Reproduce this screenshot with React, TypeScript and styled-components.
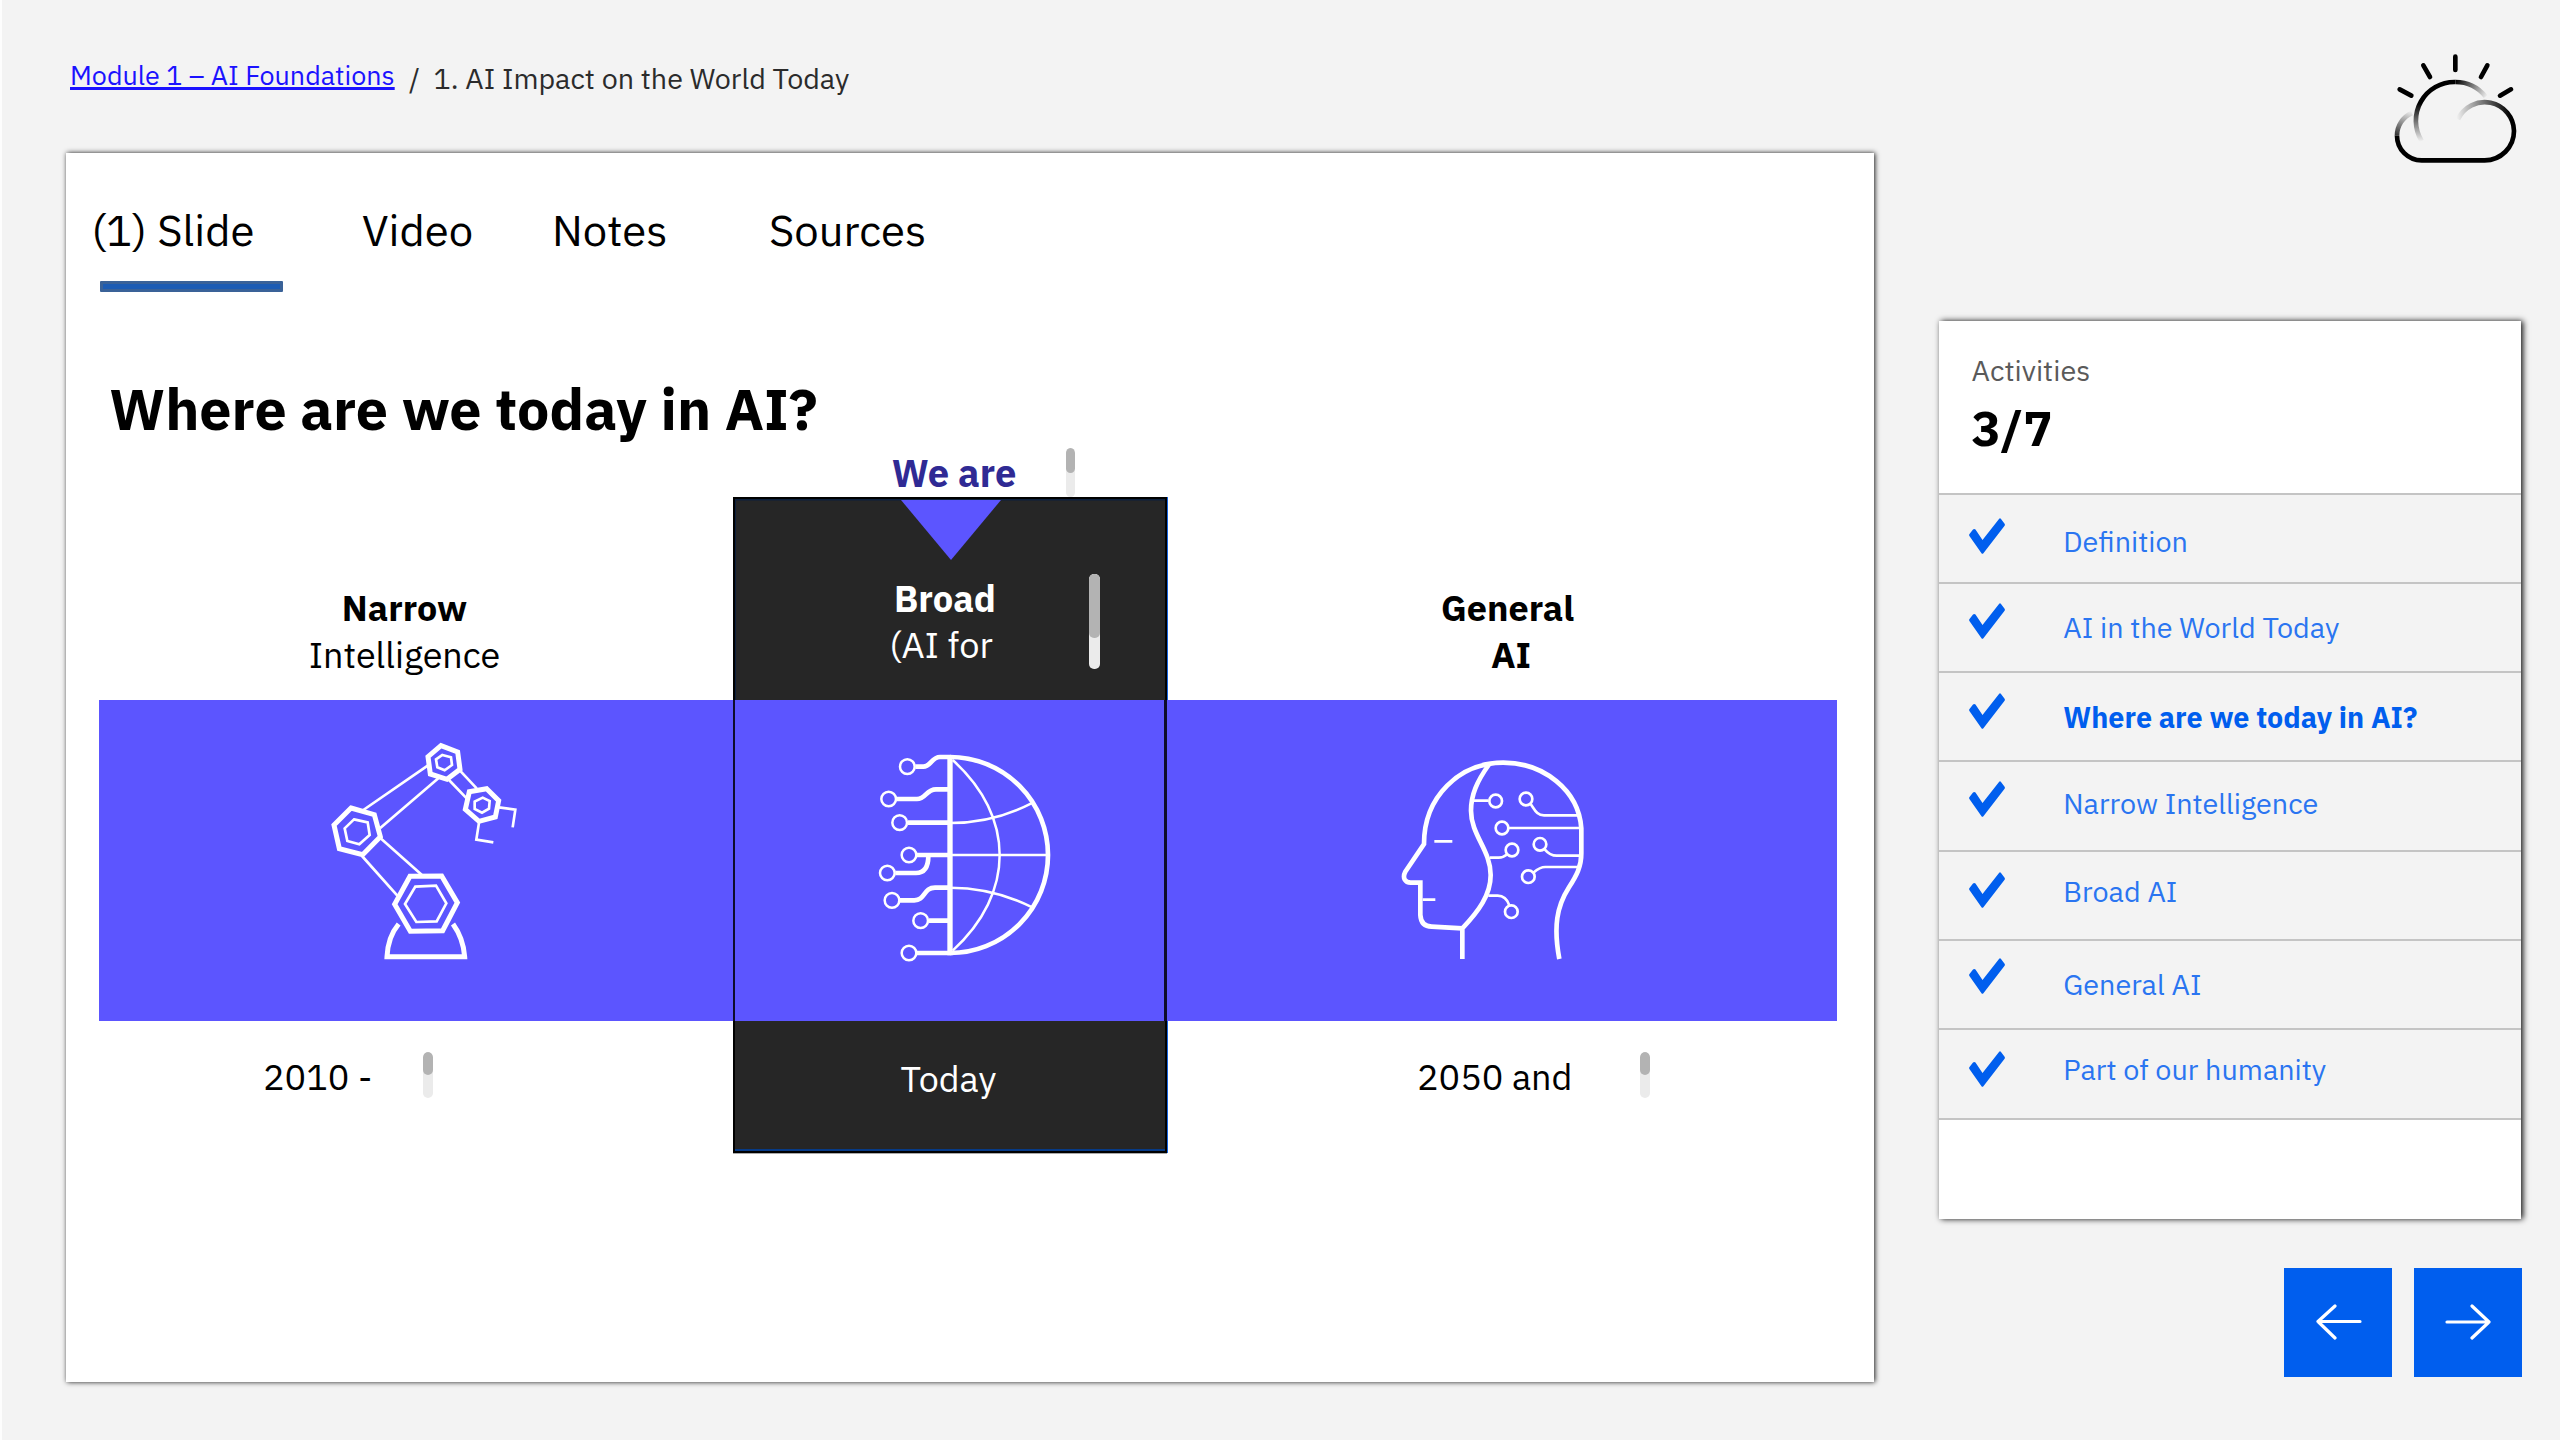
import React from "react";
import styled, { createGlobalStyle } from "styled-components";

const GlobalStyle = createGlobalStyle`
  *, *::before, *::after { box-sizing: border-box; }
  html, body { margin: 0; padding: 0; background: #f3f3f3; }
  body { font-family: "IBM Plex Sans", "Noto Sans", "Open Sans", sans-serif; color: #000; overflow: hidden; }
`;

const violet = "#5c55ff";
const blue = "#005eee";

const Page = styled.div`
  display: flex;
  width: 2560px;
  height: 1440px;
  background: #f3f3f3;
  border-left: 2px solid #fdfdfd;
`;

interface TextProps {
  $size: number;
  $line: number;
  $weight?: number;
  $nudge?: number;
  $color?: string;
}

const Text = styled.span<TextProps>`
  display: block;
  white-space: nowrap;
  font-size: ${(p) => p.$size}px;
  line-height: ${(p) => p.$line}px;
  font-weight: ${(p) => p.$weight ?? 400};
  margin-left: ${(p) => p.$nudge ?? 0}px;
  color: ${(p) => p.$color ?? "#000"};
`;

/* ---------- Left side: breadcrumb and slide ---------- */

const Main = styled.main`
  width: 1872px;
  padding-left: 64px;
`;

const Breadcrumb = styled.nav`
  display: flex;
  align-items: flex-start;
  height: 152.5px;
  padding: 55px 0 0 4px;
  line-height: 40px;
  white-space: nowrap;
`;

const ModuleLink = styled.a`
  width: 339px;
  font-size: 26.9px;
  color: #1b12ff;
  text-decoration: underline;
  text-decoration-thickness: 2.5px;
  text-underline-offset: 2px;
  text-decoration-skip-ink: none;
`;

const Crumb = styled.span<{ $width?: number }>`
  width: ${(p) => (p.$width ? `${p.$width}px` : "auto")};
  padding-top: 3.7px;
  font-size: 28.7px;
  color: #2b2b2b;
`;

const SlideCard = styled.section`
  width: 1808px;
  height: 1229.5px;
  padding-top: 49px;
  background: #fff;
  box-shadow: 1px 0 5px rgba(0, 0, 0, 0.9);
`;

const Tabs = styled.div`
  display: grid;
  grid-template-columns: 270.5px 190px 217px auto;
  padding-left: 25.5px;
`;

const TabIndicator = styled.div`
  width: 183px;
  height: 10.5px;
  margin: 23.5px 0 82.8px 34px;
  border-radius: 1px;
  background: #1c5cb4;
  border: 3px solid #3a6298;
`;

const Title = styled.h1`
  margin: 0 0 0 43.3px;
  font-size: 57.4px;
  line-height: 70px;
  font-weight: 700;
  white-space: nowrap;
`;

const Timeline = styled.div`
  display: grid;
  grid-template-columns: 634px 434px 670px;
  margin: -1.3px 0 0 33px;
`;

const Stage = styled.article`
  display: flex;
  flex-direction: column;
`;

const Callout = styled.div`
  position: relative;
  display: flex;
  justify-content: center;
  height: 53.5px;
  padding: 6.9px 0 0 8px;
`;

const Head = styled.header<{ $dark?: boolean; $top: number; $shift: number }>`
  position: relative;
  display: flex;
  flex-direction: column;
  align-items: center;
  height: 203px;
  padding-top: ${(p) => p.$top}px;
  padding-left: ${(p) => Math.max(p.$shift, 0)}px;
  padding-right: ${(p) => Math.max(-p.$shift, 0)}px;
  ${(p) =>
    p.$dark &&
    `background: #262626;
     border: solid #000;
     border-width: 2px 2.5px 0 2px;
     box-shadow: inset 1px 1.5px 0 #0c1f3c, 1px 0 0 #1564e0;`}
`;

const Band = styled.div<{ $indent: number; $dark?: boolean }>`
  height: 321px;
  padding: 20px 0 0 ${(p) => p.$indent}px;
  background: ${violet};
  ${(p) => p.$dark && "border: solid #0d0c2c; border-width: 0 3px 0 2.5px;"}
`;

const Foot = styled.footer<{ $indent?: number; $dark?: boolean }>`
  display: flex;
  align-items: flex-start;
  height: 132px;
  padding: 31px 0 0 ${(p) => p.$indent ?? 0}px;
  ${(p) =>
    p.$dark &&
    `justify-content: center;
     padding: 35.6px 3px 0 0;
     background: #262626;
     border: solid #000;
     border-width: 0 2.5px 2px 2px;
     box-shadow: inset 0 -2px 0 #063a86, 1px 0 0 #1564e0, 0 1px 0 #aaa;`}
`;

const Period = styled.div<{ $width: number }>`
  width: ${(p) => p.$width}px;
  padding-top: 2px;
`;

const ScrollTrack = styled.div<{ $height: number; $thumb: number; $width?: number }>`
  width: ${(p) => p.$width ?? 9.5}px;
  height: ${(p) => p.$height}px;
  border-radius: 5px;
  background: #ebebeb;
  overflow: hidden;

  &::before {
    content: "";
    display: block;
    height: ${(p) => p.$thumb}px;
    border-radius: 5px;
    background: #b3b3b3;
  }
`;

const ScrollOverlay = styled.div<{ $left: number; $top: number }>`
  position: absolute;
  left: ${(p) => p.$left}px;
  top: ${(p) => p.$top}px;
`;

const Marker = styled.svg`
  display: block;
  width: 100px;
  height: 60px;
  margin: 0 0 16px 14px;
`;

const StageIcon = styled.svg`
  display: block;
  width: 260px;
  height: 260px;
  fill: none;
  stroke: #fff;
`;

/* ---------- Right side: weather, activities, navigation ---------- */

const Side = styled.aside`
  display: flex;
  flex-direction: column;
  width: 686px;
  padding: 30px 0 0 65px;
`;

const Weather = styled.svg`
  display: block;
  align-self: flex-end;
  width: 240px;
  height: 160px;
`;

const ActivityCard = styled.section`
  width: 582px;
  height: 898px;
  margin-top: 131px;
  background: #fff;
  box-shadow: 2px 0 6px rgba(0, 0, 0, 0.95);
`;

const ActivityHeader = styled.header`
  display: flex;
  flex-direction: column;
  gap: 8.5px;
  height: 171.5px;
  padding: 28.5px 0 0 32.5px;
`;

const ActivityList = styled.ul`
  margin: 0;
  padding: 0;
  list-style: none;
  background: #f3f3f3;
  border-bottom: 2px solid #c4c4c4;
`;

const ActivityRow = styled.li`
  display: grid;
  grid-template-columns: 94px auto;
  align-items: start;
  height: 89.3px;
  padding-left: 30.3px;
  border-top: 2px solid #c4c4c4;
`;

const Check = styled.svg<{ $top: number }>`
  width: 36px;
  height: 36px;
  margin-top: ${(p) => p.$top - 1}px;
  fill: ${blue};
`;

const ActivityName = styled.a<{ $top: number; $active?: boolean }>`
  margin-top: ${(p) => p.$top - 0.8}px;
  font-size: ${(p) => (p.$active ? 28.7 : 28.75)}px;
  line-height: 40px;
  white-space: nowrap;
  font-weight: ${(p) => (p.$active ? 700 : 400)};
  color: ${(p) => (p.$active ? blue : "#2a75f1")};
`;

const Pager = styled.div`
  display: flex;
  gap: 21.5px;
  margin: 49px 0 0 344.5px;
`;

const PagerButton = styled.button`
  display: flex;
  align-items: center;
  justify-content: center;
  width: 108.5px;
  height: 108.5px;
  padding: 0;
  border: 0;
  background: ${blue};
`;

const Arrow = styled.svg<{ $nudge: number }>`
  width: 46px;
  height: 36px;
  margin-left: ${(p) => p.$nudge}px;
  fill: none;
  stroke: #fff;
  stroke-width: 3.2;
  stroke-linecap: round;
  stroke-linejoin: round;
`;

const activities = [
  { name: "Definition", text: 28.2, check: 24.5 },
  { name: "AI in the World Today", text: 25, check: 20 },
  { name: "Where are we today in AI?", text: 25.4, check: 21, active: true },
  { name: "Narrow Intelligence", text: 22.8, check: 20 },
  { name: "Broad AI", text: 21, check: 21.8 },
  { name: "General AI", text: 25.3, check: 18.5 },
  { name: "Part of our humanity", text: 20.7, check: 21.8 },
];

const RobotArm = () => (
  <StageIcon viewBox="0 0 780 780">
    <g strokeWidth="8">
      <path d="M190 270L383 137M240 325L415 175M480 152L530 205M447 180L500 235M241 354L365 464M186 408L292 527" />
      <path d="M597 262L646 269L638 322M537 308L529 359L580 367" />
      <path d="M427 105L453 112L456 135L434 151L412 142L408 118Z" />
      <path d="M548 233L569 243L567 266L546 278L524 267L524 245Z" />
      <path d="M162 298L203 307L209 345L178 373L142 363L134 325Z" />
      <path d="M346 500L408 497L439 550L410 604L349 606L315 552Z" />
    </g>
    <g strokeWidth="15">
      <path d="M423 77L473 96L480 148L441 178L391 162L384 110Z" />
      <path d="M560 206L596 242L586 291L537 304L496 268L508 215Z" />
      <path d="M153 264L223 284L241 350L188 404L118 386L102 315Z" />
      <path d="M330 469L425 468L472 548L428 632L331 634L284 553Z" />
      <path d="M296 612Q264 650 261 710H494Q490 655 459 612" />
    </g>
  </StageIcon>
);

const CircuitGlobe = () => (
  <StageIcon viewBox="0 0 780 780">
    <g strokeWidth="14">
      <path d="M330 112V706" strokeWidth="16" />
      <path d="M330 111A294 294 0 0 1 330 699" />
      <path d="M226 140H250C272 140 275 111 300 111H332" />
      <path d="M169 237H231C258 237 258 208 288 208H330" />
      <path d="M204 308H330M231 405H330" />
      <path d="M166 459H228Q265 459 265 408" />
      <path d="M180 541H223C256 541 250 503 285 503H330" />
      <path d="M266 602H330M231 699H332" />
    </g>
    <g strokeWidth="7.5">
      <path d="M338 120C526 290 526 520 338 692" />
      <path d="M330 405H620M330 309Q460 309 574 250M330 503Q460 503 577 562" />
      {[
        [202, 140], [146, 237], [179, 308], [207, 405],
        [142, 459], [156, 541], [242, 602], [207, 699],
      ].map(([x, y]) => (
        <circle key={y} cx={x} cy={y} r="22" />
      ))}
    </g>
  </StageIcon>
);

const ThinkingHead = () => (
  <StageIcon viewBox="0 0 780 780">
    <g strokeWidth="14">
      <path d="M568 717C550 620 560 560 597 502C620 466 634 440 634 400V325C626 210 520 128 400 128C268 128 162 230 162 372L106 455C96 475 106 488 122 488H151V585Q153 619 185 620L277 625" />
      <path d="M277 717V625C325 575 362 525 362 465C362 390 303 345 303 272C303 225 320 185 358 132" />
    </g>
    <g strokeWidth="8">
      <path d="M312 242H355M482 252C495 270 500 286 522 286H625M416 324H635" />
      <path d="M360 413H386Q400 413 412 403M524 388Q540 407 560 407H632M490 458Q510 441 526 441H625M355 527H383Q408 527 418 556" />
      <path d="M193 364H247M158 539H196" />
      {[
        [377, 243], [468, 237], [396, 324], [426, 390],
        [510, 373], [475, 470], [424, 575],
      ].map(([x, y]) => (
        <circle key={y} cx={x} cy={y} r="19" />
      ))}
    </g>
  </StageIcon>
);

const SunCloud = () => (
  <Weather viewBox="0 0 720 480" fill="none" strokeWidth="14">
    <defs>
      <linearGradient id="sunLeft" gradientUnits="userSpaceOnUse" x1="0" y1="335" x2="0" y2="220">
        <stop offset="0" stopOpacity="0" />
        <stop offset="1" stopOpacity="1" />
      </linearGradient>
      <linearGradient id="sunRight" gradientUnits="userSpaceOnUse" x1="406" y1="156" x2="502" y2="200">
        <stop offset="0" stopOpacity="1" />
        <stop offset="1" stopOpacity="0" />
      </linearGradient>
      <linearGradient id="cloudRight" gradientUnits="userSpaceOnUse" x1="410" y1="268" x2="570" y2="250">
        <stop offset="0" stopOpacity="0" />
        <stop offset="1" stopOpacity="1" />
      </linearGradient>
      <linearGradient id="cloudLeft" gradientUnits="userSpaceOnUse" x1="280" y1="245" x2="240" y2="345">
        <stop offset="0" stopOpacity="0" />
        <stop offset="1" stopOpacity="1" />
      </linearGradient>
    </defs>
    <path d="M406 80V120M310 106L330 141M502 106L483 141M239 178L274 197M573 178L540 197" stroke="#000" strokeLinecap="round" />
    <path d="M305 333A116 116 0 0 1 406 156" stroke="url(#sunLeft)" />
    <path d="M406 156A116 116 0 0 1 497 200" stroke="url(#sunRight)" />
    <path d="M414 268A88 88 0 0 1 582 303" stroke="url(#cloudRight)" />
    <path d="M276 249A74 74 0 0 0 231 317" stroke="url(#cloudLeft)" />
    <path d="M231 317A74 74 0 0 0 305 391H494A88 88 0 0 0 582 303" stroke="#000" />
  </Weather>
);

export default function App() {
  return (
    <Page>
      <GlobalStyle />
      <Main>
        <Breadcrumb>
          <ModuleLink>Module 1 – AI Foundations</ModuleLink>
          <Crumb $width={24.5}>/</Crumb>
          <Crumb>1. AI Impact on the World Today</Crumb>
        </Breadcrumb>

        <SlideCard>
          <Tabs>
            <Text $size={43.6} $line={56}>(1) Slide</Text>
            <Text $size={43.6} $line={56}>Video</Text>
            <Text $size={43.6} $line={56}>Notes</Text>
            <Text $size={43.6} $line={56}>Sources</Text>
          </Tabs>
          <TabIndicator />
          <Title>Where are we today in AI?</Title>

          <Timeline>
            <Stage>
              <Callout />
              <Head $top={87.2} $shift={-23}>
                <Text $size={35.9} $line={47} $weight={700}>Narrow</Text>
                <Text $size={35.9} $line={47}>Intelligence</Text>
              </Head>
              <Band $indent={201}>
                <RobotArm />
              </Band>
              <Foot $indent={164}>
                <Period $width={160}>
                  <Text $size={36} $line={46}>2010 -</Text>
                </Period>
                <ScrollTrack $height={46} $thumb={23} />
              </Foot>
            </Stage>

            <Stage>
              <Callout>
                <Text $size={38.1} $line={46} $weight={700} $color="#2f2a94">We are</Text>
                <ScrollOverlay $left={332.5} $top={5}>
                  <ScrollTrack $height={49} $thumb={24.5} />
                </ScrollOverlay>
              </Callout>
              <Head $dark $top={1} $shift={-12}>
                <Marker viewBox="0 0 100 60">
                  <path d="M0 0H100L50 60Z" fill={violet} />
                </Marker>
                <Text $size={36.3} $line={46} $weight={700} $nudge={2} $color="#fff">Broad</Text>
                <Text $size={36.2} $line={46} $nudge={-6} $color="#fff">(AI for</Text>
                <ScrollOverlay $left={354} $top={75}>
                  <ScrollTrack $width={11} $height={95.5} $thumb={64} />
                </ScrollOverlay>
              </Head>
              <Band $dark $indent={104.5}>
                <CircuitGlobe />
              </Band>
              <Foot $dark>
                <Text $size={35.9} $line={46} $color="#fff">Today</Text>
              </Foot>
            </Stage>

            <Stage>
              <Callout />
              <Head $top={87.2} $shift={11}>
                <Text $size={36} $line={47} $weight={700}>General</Text>
                <Text $size={36} $line={47} $weight={700} $nudge={7}>AI</Text>
              </Head>
              <Band $indent={203}>
                <ThinkingHead />
              </Band>
              <Foot $indent={250}>
                <Period $width={223}>
                  <Text $size={36} $line={46}>2050 and</Text>
                </Period>
                <ScrollTrack $height={46} $thumb={23} />
              </Foot>
            </Stage>
          </Timeline>
        </SlideCard>
      </Main>

      <Side>
        <SunCloud />
        <ActivityCard>
          <ActivityHeader>
            <Text $size={28.8} $line={40} $color="#5a5a5a">Activities</Text>
            <Text $size={48.8} $line={60} $weight={700}>3/7</Text>
          </ActivityHeader>
          <ActivityList>
            {activities.map((a) => (
              <ActivityRow key={a.name}>
                <Check $top={a.check} viewBox="0 0 36 36">
                  <path d="M.4 18Q-.2 17 .5 16L4 11.6Q5.2 10.5 6.5 11.6L13.5 22L30 .9Q31 -.2 32 .9L35.6 5.800Q36.200 6.800 35.600 7.800L14.400 35.200Q13.400 36.200 12.500 35.200Z" />
                </Check>
                <ActivityName $top={a.text} $active={a.active}>
                  {a.name}
                </ActivityName>
              </ActivityRow>
            ))}
          </ActivityList>
        </ActivityCard>
        <Pager>
          <PagerButton aria-label="Previous">
            <Arrow $nudge={3} viewBox="0 0 46 36">
              <path d="M44 17.5H2M19 2L2 17.5L19 34" />
            </Arrow>
          </PagerButton>
          <PagerButton aria-label="Next">
            <Arrow $nudge={0} viewBox="0 0 46 36">
              <path d="M2 18H44M27 2L44 18L27 34" />
            </Arrow>
          </PagerButton>
        </Pager>
      </Side>
    </Page>
  );
}
